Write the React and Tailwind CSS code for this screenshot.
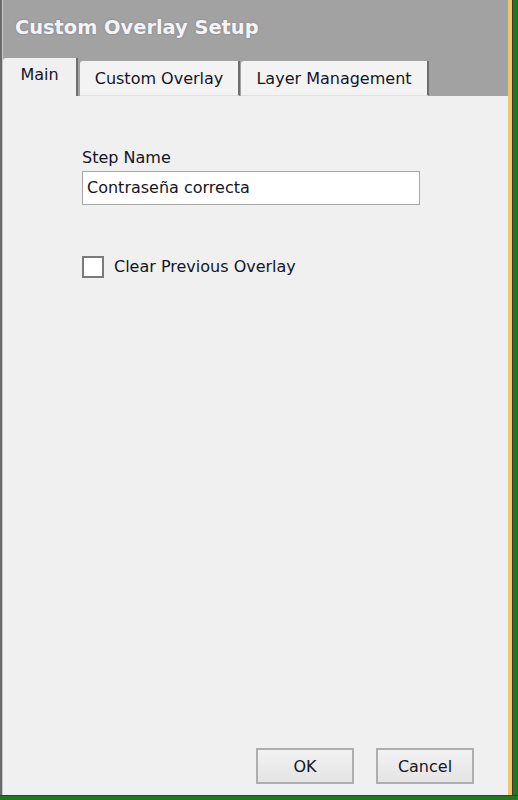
export default function App() {
  const font = { fontFamily: '"DejaVu Sans", Verdana, sans-serif' };
  return (
    <div className="w-[518px] h-[800px] flex flex-col bg-[#1f7a1f] overflow-hidden" style={font}>
      <div className="flex flex-1 min-h-0">
        <div className="w-[2px] bg-[#6a6a6a]" />
        <div className="w-[1px] bg-[#c8c8c8]" />
        <div className="flex-1 flex flex-col min-w-0">
          <div className="h-[96px] bg-[#a2a2a2] flex flex-col">
            <div className="pl-[12px] pt-[16px] h-[58px] text-[19.4px] font-bold text-[#f4f4f8] [text-shadow:0_0_2px_rgba(90,90,110,0.6)] leading-[24px]">
              Custom Overlay Setup
            </div>
            <div className="flex items-end flex-1">
              <div className="w-[75px] h-[38px] bg-[#f0f0f0] rounded-tl-[3px] border-r-2 border-[#6e6e6e] flex justify-center pt-[6px] text-[16px] leading-[22px] text-[#151525]">
                Main
              </div>
              <div className="ml-[2px] w-[160px] h-[35px] bg-[#f3f3f3] rounded-tl-[3px] border-r-2 border-[#6e6e6e] border-b border-b-[#e0e0e0] flex justify-center pt-[7px] text-[16px] leading-[22px] text-[#151525]">
                Custom Overlay
              </div>
              <div className="ml-[1px] w-[188px] h-[35px] bg-[#f3f3f3] rounded-tl-[3px] border-r-2 border-[#6e6e6e] border-b border-b-[#e0e0e0] flex justify-center pt-[7px] text-[16px] leading-[22px] text-[#151525]">
                Layer Management
              </div>
            </div>
          </div>
          <div className="flex-1 bg-[#f0f0f0] flex flex-col pl-[79px] pr-[90px]">
            <div className="mt-[51px] text-[16px] leading-[21px] text-[#151525]">Step Name</div>
            <div className="mt-[3px] h-[34px] w-[338px] bg-white border border-[#a7a7a7] flex items-center pl-[4px] text-[16px] text-[#151525]">
              Contraseña correcta
            </div>
            <div className="mt-[50px] flex items-center">
              <div className="w-[22px] h-[22px] bg-white border-2 border-[#7a7a7a]" />
              <span className="ml-[10px] text-[16px] text-[#151525]">Clear Previous Overlay</span>
            </div>
            <div className="flex-1" />
            <div className="flex justify-end gap-[22px] mb-[11px] -mr-[56px]">
              <div className="w-[98px] h-[36px] border-2 border-[#aeaeae] bg-gradient-to-b from-[#f2f2f2] to-[#e4e4e4] flex items-center justify-center pt-[2px] text-[16px] text-[#151525]">OK</div>
              <div className="w-[98px] h-[36px] border-2 border-[#aeaeae] bg-gradient-to-b from-[#f2f2f2] to-[#e4e4e4] flex items-center justify-center pt-[2px] text-[16px] text-[#151525]">Cancel</div>
            </div>
          </div>
        </div>
        <div className="w-[4px] bg-[#f0c763]" />
        <div className="w-[1px] bg-[#3a3a3a]" />
        <div className="w-[5px] bg-[#1f7a1f]" />
      </div>
      <div className="h-[1px] bg-[#3a3a3a]" />
      <div className="h-[4px] bg-[#1f7a1f]" />
    </div>
  );
}
